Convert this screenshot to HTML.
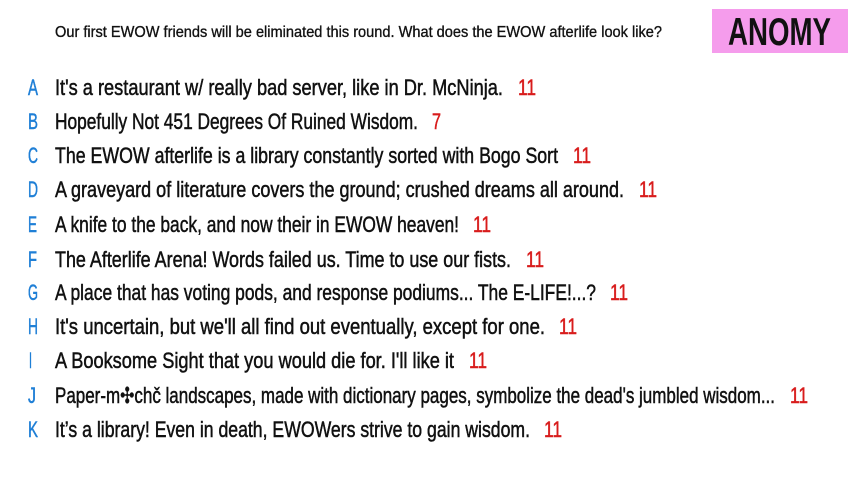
<!DOCTYPE html>
<html><head><meta charset="utf-8"><style>
html,body{margin:0;padding:0;background:#fff;width:853px;height:480px;overflow:hidden}
svg{display:block}
text{font-family:"Liberation Sans",sans-serif}
</style></head><body>
<svg width="853" height="480" viewBox="0 0 853 480" xmlns="http://www.w3.org/2000/svg">
<rect x="712" y="9" width="136" height="44" fill="#f59cec"/>
<text x="728" y="45" font-size="39" font-weight="bold" fill="#111" textLength="103" lengthAdjust="spacingAndGlyphs">ANOMY</text>
<text x="55" y="37" font-size="16" fill="#111" stroke="#111" stroke-width="0.35" textLength="607" lengthAdjust="spacingAndGlyphs">Our first EWOW friends will be eliminated this round. What does the EWOW afterlife look like?</text>
<g font-size="22" stroke-width="0.5">
<g fill="#1f7fd6" stroke="#1f7fd6">
<text x="28" y="95" textLength="10" lengthAdjust="spacingAndGlyphs">A</text>
<text x="28" y="129" textLength="10" lengthAdjust="spacingAndGlyphs">B</text>
<text x="28" y="163" textLength="10" lengthAdjust="spacingAndGlyphs">C</text>
<text x="28" y="197" textLength="10" lengthAdjust="spacingAndGlyphs">D</text>
<text x="28" y="232" textLength="9" lengthAdjust="spacingAndGlyphs">E</text>
<text x="28" y="267" textLength="9" lengthAdjust="spacingAndGlyphs">F</text>
<text x="28" y="300" textLength="10" lengthAdjust="spacingAndGlyphs">G</text>
<text x="28" y="334" textLength="10" lengthAdjust="spacingAndGlyphs">H</text>
<text x="29" y="368" textLength="3" lengthAdjust="spacingAndGlyphs">I</text>
<text x="28" y="403" textLength="8" lengthAdjust="spacingAndGlyphs">J</text>
<text x="28" y="437" textLength="10" lengthAdjust="spacingAndGlyphs">K</text>
</g>
<g fill="#111" stroke="#111">
<text x="55" y="95" textLength="448" lengthAdjust="spacingAndGlyphs">It's a restaurant w/ really bad server, like in Dr. McNinja.</text>
<text x="55" y="129" textLength="363" lengthAdjust="spacingAndGlyphs">Hopefully Not 451 Degrees Of Ruined Wisdom.</text>
<text x="55" y="163" textLength="503" lengthAdjust="spacingAndGlyphs">The EWOW afterlife is a library constantly sorted with Bogo Sort</text>
<text x="55" y="197" textLength="569" lengthAdjust="spacingAndGlyphs">A graveyard of literature covers the ground; crushed dreams all around.</text>
<text x="55" y="232" textLength="404" lengthAdjust="spacingAndGlyphs">A knife to the back, and now their in EWOW heaven!</text>
<text x="55" y="267" textLength="456" lengthAdjust="spacingAndGlyphs">The Afterlife Arena! Words failed us. Time to use our fists.</text>
<text x="55" y="300" textLength="541" lengthAdjust="spacingAndGlyphs">A place that has voting pods, and response podiums... The E-LIFE!...?</text>
<text x="55" y="334" textLength="490" lengthAdjust="spacingAndGlyphs">It's uncertain, but we'll all find out eventually, except for one.</text>
<text x="55" y="368" textLength="399" lengthAdjust="spacingAndGlyphs">A Booksome Sight that you would die for. I'll like it</text>
<text x="55" y="403" textLength="720" lengthAdjust="spacingAndGlyphs">Paper-m✣chč landscapes, made with dictionary pages, symbolize the dead's jumbled wisdom...</text>
<text x="55" y="437" textLength="475" lengthAdjust="spacingAndGlyphs">It’s a library! Even in death, EWOWers strive to gain wisdom.</text>
</g>
<g fill="#d81c1c" stroke="#d81c1c">
<text x="518" y="95" textLength="18" lengthAdjust="spacingAndGlyphs">11</text>
<text x="432" y="129" textLength="9" lengthAdjust="spacingAndGlyphs">7</text>
<text x="573" y="163" textLength="18" lengthAdjust="spacingAndGlyphs">11</text>
<text x="639" y="197" textLength="18" lengthAdjust="spacingAndGlyphs">11</text>
<text x="473" y="232" textLength="18" lengthAdjust="spacingAndGlyphs">11</text>
<text x="526" y="267" textLength="18" lengthAdjust="spacingAndGlyphs">11</text>
<text x="610" y="300" textLength="18" lengthAdjust="spacingAndGlyphs">11</text>
<text x="559" y="334" textLength="18" lengthAdjust="spacingAndGlyphs">11</text>
<text x="469" y="368" textLength="18" lengthAdjust="spacingAndGlyphs">11</text>
<text x="790" y="403" textLength="18" lengthAdjust="spacingAndGlyphs">11</text>
<text x="544" y="437" textLength="18" lengthAdjust="spacingAndGlyphs">11</text>
</g>
</g>
</svg>
</body></html>
